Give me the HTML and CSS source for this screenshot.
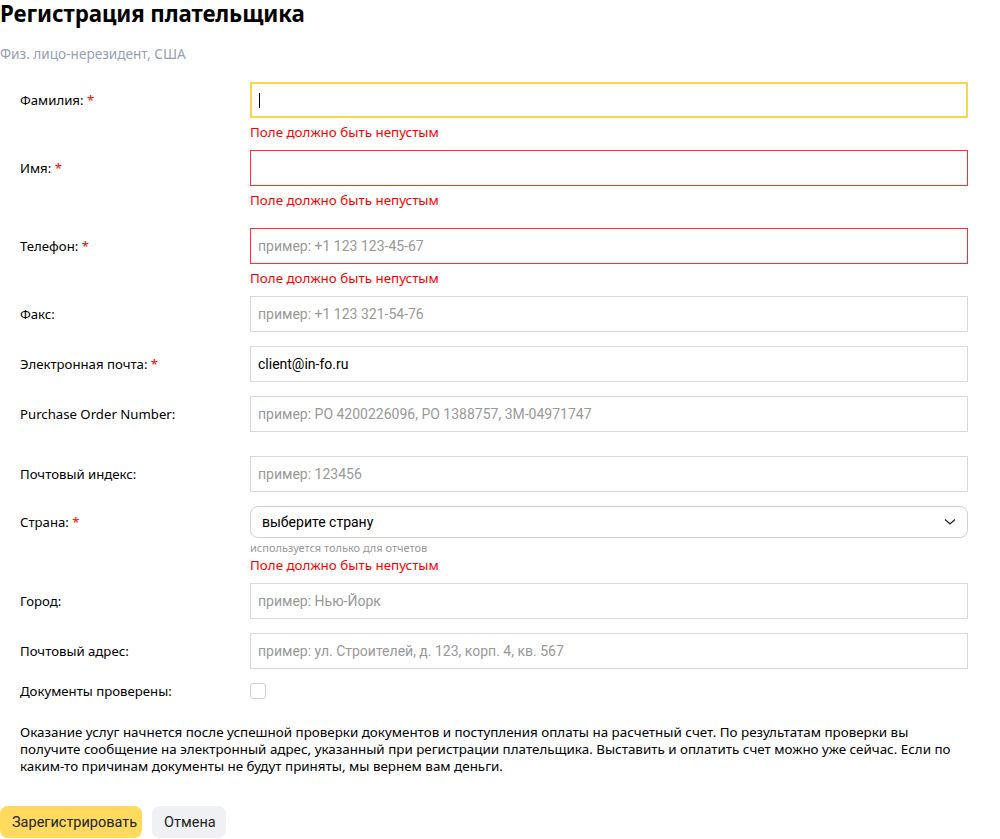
FILE: index.html
```html
<!DOCTYPE html>
<html lang="ru">
<head>
<meta charset="utf-8">
<title>Регистрация плательщика</title>
<link rel="stylesheet" href="styles.css">
</head>
<body>
<div class="page">
  <h1 class="title">Регистрация плательщика</h1>
  <div class="subtitle">Физ. лицо-нерезидент, США</div>

  <div class="form">
    <div class="row row-err">
      <div class="label">Фамилия: <span class="req">*</span></div>
      <div class="control">
        <div class="field field-focus"><span class="caret"></span></div>
        <div class="error">Поле должно быть непустым</div>
      </div>
    </div>
    <div class="row row-err-wide">
      <div class="label">Имя: <span class="req">*</span></div>
      <div class="control">
        <div class="field field-invalid"></div>
        <div class="error">Поле должно быть непустым</div>
      </div>
    </div>
    <div class="row row-err">
      <div class="label">Телефон: <span class="req">*</span></div>
      <div class="control">
        <div class="field field-invalid"><span class="ph">пример: +1 123 123-45-67</span></div>
        <div class="error">Поле должно быть непустым</div>
      </div>
    </div>
    <div class="row">
      <div class="label">Факс:</div>
      <div class="control">
        <div class="field"><span class="ph">пример: +1 123 321-54-76</span></div>
      </div>
    </div>
    <div class="row">
      <div class="label">Электронная почта: <span class="req">*</span></div>
      <div class="control">
        <div class="field"><span class="val">client@in-fo.ru</span></div>
      </div>
    </div>
    <div class="row row-wide">
      <div class="label">Purchase Order Number:</div>
      <div class="control">
        <div class="field"><span class="ph">пример: PO 4200226096, PO 1388757, 3M-04971747</span></div>
      </div>
    </div>
    <div class="row">
      <div class="label">Почтовый индекс:</div>
      <div class="control">
        <div class="field"><span class="ph">пример: 123456</span></div>
      </div>
    </div>
    <div class="row row-err">
      <div class="label label-select">Страна: <span class="req">*</span></div>
      <div class="control">
        <div class="select">
          <span class="val">выберите страну</span>
          <svg class="chevron" width="12" height="8" viewBox="0 0 12 8"><path d="M1 1.5 L6 6 L11 1.5" fill="none" stroke="#222" stroke-width="1.3"/></svg>
        </div>
        <div class="hint">используется только для отчетов</div>
        <div class="error error-tight">Поле должно быть непустым</div>
      </div>
    </div>
    <div class="row">
      <div class="label">Город:</div>
      <div class="control">
        <div class="field"><span class="ph">пример: Нью-Йорк</span></div>
      </div>
    </div>
    <div class="row">
      <div class="label">Почтовый адрес:</div>
      <div class="control">
        <div class="field"><span class="ph">пример: ул. Строителей, д. 123, корп. 4, кв. 567</span></div>
      </div>
    </div>
    <div class="row row-check">
      <div class="label label-check">Документы проверены:</div>
      <div class="control">
        <span class="checkbox"></span>
      </div>
    </div>
  </div>

  <p class="note">Оказание услуг начнется после успешной проверки документов и поступления оплаты на расчетный счет. По результатам проверки вы<br>получите сообщение на электронный адрес, указанный при регистрации плательщика. Выставить и оплатить счет можно уже сейчас. Если по каким-то причинам документы не будут приняты, мы вернем вам деньги.</p>

  <div class="actions">
    <button class="btn btn-primary">Зарегистрировать</button>
    <button class="btn btn-secondary">Отмена</button>
  </div>
</div>
</body>
</html>
```

FILE: styles.css
```css
* { box-sizing: border-box; }
html, body { margin: 0; padding: 0; background: #fff; }
body {
  font-family: "Noto Sans", "Open Sans", sans-serif;
  color: #000;
  font-size: 14px;
}
.page { width: 1000px; }
.title {
  margin: 0;
  padding-top: 1px;
  font-size: 22.3px;
  line-height: 26px;
  font-weight: 700;
  letter-spacing: -0.1px;
}
.subtitle {
  margin-top: 19px;
  font-size: 13.6px;
  line-height: 16px;
  color: #97a0b6;
}
.form { margin-top: 20px; padding-left: 20px; }
.row {
  display: flex;
  align-items: flex-start;
  margin-bottom: 14px;
}
.row-err { margin-bottom: 9px; }
.row-err-wide { margin-bottom: 19px; }
.row-wide { margin-bottom: 24px; }
.label {
  width: 230px;
  flex: none;
  font-size: 13.2px;
  line-height: 36px;
}
.label-select { line-height: 32px; }
.label-check { line-height: 16px; }
.req { color: #f00; }
.control { width: 718px; flex: none; }
.field {
  height: 36px;
  border: 1px solid #d9d9d9;
  display: flex;
  align-items: center;
  padding: 0 7px;
  font-family: Roboto, "Liberation Sans", sans-serif;
  font-size: 14px;
}
.field-focus { border: 2px solid #fdd54d; padding: 0 6px; }
.field-invalid { border-color: #ff2f2f; }
.caret { width: 1px; height: 15px; background: #000; margin-left: 1px; }
.ph { color: #999; }
.val { color: #000; }
.select {
  height: 32px;
  border: 1px solid #d0d0d0;
  border-radius: 8px;
  display: flex;
  align-items: center;
  justify-content: space-between;
  padding: 0 11px 0 11px;
  font-family: Roboto, "Liberation Sans", sans-serif;
  font-size: 14px;
}
.chevron { display: block; }
.hint {
  margin-top: 3px;
  font-size: 11px;
  line-height: 14px;
  color: #999;
}
.error {
  margin-top: 5px;
  font-size: 13.4px;
  line-height: 18px;
  color: #f00;
}
.error-tight { margin-top: 1px; }
.checkbox {
  display: block;
  width: 16px;
  height: 16px;
  border: 1px solid #cfcfcf;
  border-radius: 3px;
}
.note {
  margin: 25px 0 0;
  padding: 0 12px 0 20px;
  font-size: 13.4px;
  line-height: 17px;
}
.actions {
  margin-top: 31px;
  display: flex;
  gap: 10px;
}
.btn {
  height: 32px;
  border: 0;
  border-radius: 8px;
  padding: 0 12px;
  font-family: Roboto, "Liberation Sans", sans-serif;
  font-size: 14.5px;
  color: #222;
  cursor: pointer;
}
.btn-primary { background: #ffda5c; width: 142px; }
.btn-secondary { background: #f0f1f4; width: 74px; }
```
